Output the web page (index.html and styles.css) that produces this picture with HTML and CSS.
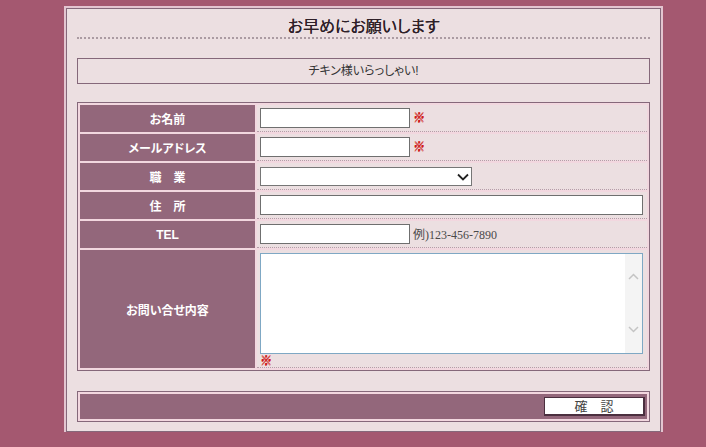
FILE: index.html
```html
<!DOCTYPE html>
<html lang="ja">
<head>
    <meta charset="UTF-8">
    <meta name="viewport" content="width=device-width, initial-scale=1.0">
    <title>お問い合せ</title>
    <link rel="stylesheet" href="styles.css">
</head>
<body>
    <div class="panel">
        <h1 class="title">お早めにお願いします</h1>

        <div class="notice">チキン様いらっしゃい!</div>

        <form class="form-table" onsubmit="return false;">
            <div class="label">お名前</div>
            <div class="field">
                <input type="text" class="input-short">
                <span class="req">※</span>
            </div>

            <div class="label">メールアドレス</div>
            <div class="field">
                <input type="text" class="input-short">
                <span class="req">※</span>
            </div>

            <div class="label">職　業</div>
            <div class="field">
                <div class="select-wrap">
                    <select class="select-job">
                        <option></option>
                    </select>
                    <svg class="select-arrow" width="12" height="8" viewBox="0 0 12 8"><path d="M1 1.5 L6 6.5 L11 1.5" fill="none" stroke="#222" stroke-width="1.8"/></svg>
                </div>
            </div>

            <div class="label">住　所</div>
            <div class="field">
                <input type="text" class="input-long">
            </div>

            <div class="label">TEL</div>
            <div class="field">
                <input type="text" class="input-short">
                <span class="hint">例)123-456-7890</span>
            </div>

            <div class="label">お問い合せ内容</div>
            <div class="field field-message">
                <div class="message-box">
                    <textarea></textarea>
                    <div class="fake-scroll">
                        <svg width="11" height="7" viewBox="0 0 11 7"><path d="M1 6 L5.5 1.5 L10 6" fill="none" stroke="#c4c4c4" stroke-width="1.5"/></svg>
                        <svg width="11" height="7" viewBox="0 0 11 7"><path d="M1 1 L5.5 5.5 L10 1" fill="none" stroke="#c4c4c4" stroke-width="1.5"/></svg>
                    </div>
                </div>
                <span class="req">※</span>
            </div>
        </form>

        <div class="submit-bar">
            <div class="submit-inner">
                <button type="button" class="btn-confirm">確　認</button>
            </div>
        </div>
    </div>
</body>
</html>
```

FILE: styles.css
```css
* {
    margin: 0;
    padding: 0;
    box-sizing: border-box;
}

:root {
    --page-bg: #a45870;
    --panel-bg: #ecdfe1;
    --line: #85687a;
    --label-bg: #93677b;
    --gap-bg: #f2d7df;
    --req: #d01a1a;
}

body {
    background-color: var(--page-bg);
    font-family: 'Liberation Sans', 'Noto Sans CJK JP', sans-serif;
    font-feature-settings: "palt";
    color: #333;
}

.panel {
    width: 595px;
    margin: 8px 0 0 66px;
    padding: 0 10px 9px;
    background: var(--panel-bg);
    border: 1px solid var(--line);
    box-shadow: 0 0 0 2px #e3c5d0;
}

.title {
    padding-top: 8px;
    font-size: 16px;
    font-weight: normal;
    line-height: 20px;
    text-align: center;
    color: #2e2028;
    text-shadow: 0.3px 0 0 #2e2028;
    border-bottom: 2px dotted #ab9ba2;
}

.notice {
    margin-top: 19px;
    height: 26px;
    line-height: 24px;
    border: 1px solid var(--line);
    font-size: 12px;
    text-align: center;
    color: #333;
}

.form-table {
    display: grid;
    grid-template-columns: 175px 1fr;
    grid-template-rows: repeat(5, 27px) 118px;
    gap: 2px;
    padding: 2px;
    margin-top: 18px;
    border: 1px solid var(--line);
    background: var(--gap-bg);
}

.label {
    display: flex;
    align-items: center;
    justify-content: center;
    background: var(--label-bg);
    color: #fff;
    font-size: 12px;
    font-weight: bold;
}

.field {
    display: flex;
    align-items: center;
    gap: 3px;
    padding: 0 3px;
    background: var(--panel-bg);
    border-bottom: 1px dotted #b69ca8;
}

.field input,
.field select {
    height: 20px;
    border: 1px solid #6f6f6f;
    border-radius: 0;
    background: #fff;
    font-size: 12px;
    outline: none;
}

.input-short {
    width: 150px;
}

.input-long {
    width: 383px;
}

.select-wrap {
    position: relative;
    display: flex;
}

.field select.select-job {
    width: 212px;
    height: 19px;
    border-color: #767676;
    appearance: none;
    -webkit-appearance: none;
}

.select-arrow {
    position: absolute;
    right: 3px;
    top: 6px;
    pointer-events: none;
}

.req {
    color: var(--req);
    font-size: 12px;
    font-weight: bold;
    line-height: 1;
    text-shadow: 0.5px 0 0 var(--req), 0 0.5px 0 var(--req);
}

.hint {
    font-family: 'Liberation Serif', 'Noto Sans CJK JP', serif;
    font-size: 12px;
    color: #4a4a4a;
}

.field-message {
    flex-direction: column;
    align-items: flex-start;
    padding-top: 3px;
    gap: 1px;
}

.message-box {
    display: flex;
    width: 383px;
    height: 101px;
    border: 1px solid #7fa8c4;
    background: #fff;
}

.message-box textarea {
    flex: 1;
    border: none;
    resize: none;
    outline: none;
    font-size: 12px;
    padding: 2px;
}

.fake-scroll {
    width: 17px;
    background: #f4f4f4;
    display: flex;
    flex-direction: column;
    align-items: center;
    justify-content: space-between;
    padding: 19px 0 20px;
}

.submit-bar {
    margin-top: 20px;
    padding: 2px;
    border: 1px solid var(--line);
    background: var(--gap-bg);
}

.submit-inner {
    height: 25px;
    display: flex;
    align-items: center;
    justify-content: flex-end;
    padding-right: 2px;
    background: var(--label-bg);
}

.btn-confirm {
    width: 101px;
    height: 19px;
    background: #fff;
    border-style: solid;
    border-color: #4b2f3f;
    border-width: 1px 2px 2px 1px;
    font-family: 'Liberation Sans', 'Noto Sans CJK JP', sans-serif;
    font-size: 13px;
    line-height: 15px;
    color: #444;
    cursor: pointer;
}
```
